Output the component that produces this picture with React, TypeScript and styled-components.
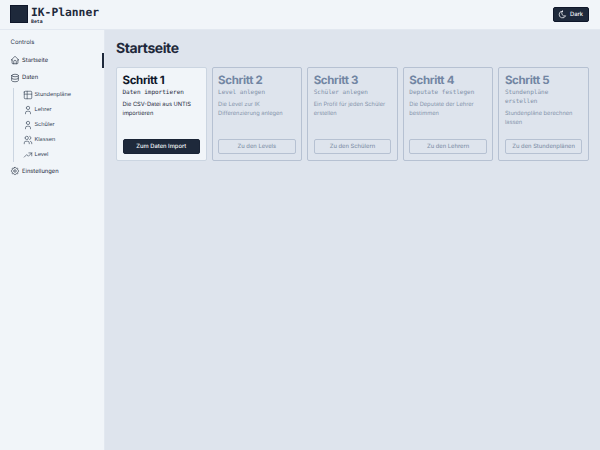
import React from "react";
import styled, { createGlobalStyle } from "styled-components";
import { TbMoon, TbHome, TbDatabase, TbTable, TbUser, TbUsers, TbTrendingUp, TbSettings } from "react-icons/tb";

const Global = createGlobalStyle`
  html, body { margin: 0; padding: 0; height: 100%; }
  #root { height: 100%; }
  body { font-family: Inter, "Liberation Sans", sans-serif; background: #dee4ed; text-rendering: geometricPrecision; }
  * { box-sizing: border-box; }
`;

const Page = styled.div`
  width: 600px;
  height: 450px;
  display: flex;
  flex-direction: column;
  overflow: hidden;
`;

const Header = styled.header`
  height: 29.5px;
  flex: none;
  display: flex;
  align-items: center;
  justify-content: space-between;
  padding: 0 11.5px 0 10px;
  background: #f1f5f9;
  border-bottom: 1px solid #e2e8f0;
`;

const Brand = styled.div`
  display: flex;
  align-items: center;
  gap: 3px;
`;

const Logo = styled.div`
  width: 18px;
  height: 18px;
  background: #1e293b;
  border: 1px solid #0f172a;
`;

const BrandText = styled.div`
  display: flex;
  flex-direction: column;
  padding-top: 2.5px;
  font-family: "DejaVu Sans Mono", "Liberation Mono", monospace;
  color: #1e293b;
`;

const BrandTitle = styled.span`
  font-size: 11.3px;
  font-weight: 700;
  line-height: 13px;
`;

const BrandSub = styled.span`
  font-size: 4.8px;
  font-weight: 700;
  line-height: 6px;
  margin-top: 1px;
`;

const ThemeButton = styled.button`
  height: 15px;
  width: 36px;
  display: flex;
  align-items: center;
  justify-content: center;
  gap: 3px;
  padding: 0;
  border: 1px solid #0f172a;
  border-radius: 2px;
  background: #1e293b;
  color: #f8fafc;
  font: 500 5.8px Inter, sans-serif;
  text-rendering: geometricPrecision;
`;

const Body = styled.div`
  flex: 1;
  display: flex;
  min-height: 0;
`;

const Sidebar = styled.aside`
  width: 104.5px;
  flex: none;
  background: #f1f5f9;
  border-right: 1px solid #e2e8f0;
  padding-top: 8px;
  display: flex;
  flex-direction: column;
`;

const SidebarLabel = styled.div`
  font-size: 6px;
  line-height: 9px;
  color: #334155;
  padding-left: 10.5px;
  margin-bottom: 5px;
`;

const NavItem = styled.div<{ $active?: boolean }>`
  position: relative;
  height: 17.5px;
  display: flex;
  align-items: center;
  gap: 2px;
  padding-left: 10px;
  font-size: 5.8px;
  color: #1e293b;
  svg { flex: none; }
  ${(p) =>
    p.$active &&
    `&::after { content: ""; position: absolute; right: 0; top: 1.5px; width: 1.5px; height: 15px; background: #1e293b; }`}
`;

const SubNav = styled.div`
  margin: 1px 0 0.5px 13px;
  padding-left: 8.5px;
  border-left: 1px solid #cbd5e1;
  display: flex;
  flex-direction: column;
`;

const SubItem = styled.div`
  height: 14.9px;
  display: flex;
  align-items: center;
  gap: 2px;
  font-size: 5.6px;
  color: #334155;
  svg { flex: none; }
`;

const Main = styled.main`
  flex: 1;
  min-width: 0;
  padding: 10px 11px 0 11.5px;
`;

const Title = styled.h1`
  margin: 0 0 9.5px;
  font-size: 14px;
  line-height: 18px;
  font-weight: 700;
  letter-spacing: -0.03em;
  color: #1e293b;
`;

const Cards = styled.div`
  display: grid;
  grid-template-columns: repeat(5, 1fr);
  gap: 5px;
`;

const Card = styled.section<{ $active?: boolean }>`
  height: 94px;
  padding: 6px 5.5px;
  display: flex;
  flex-direction: column;
  border: 1px solid ${(p) => (p.$active ? "#cbd5e1" : "#b6c1d2")};
  border-radius: 2px;
  background: ${(p) => (p.$active ? "#f1f5f9" : "transparent")};
`;

const CardTitle = styled.h2<{ $active?: boolean }>`
  margin: 0;
  font-size: 11.5px;
  line-height: 13px;
  font-weight: 700;
  letter-spacing: -0.03em;
  color: ${(p) => (p.$active ? "#0f172a" : "#7286a3")};
`;

const CardSub = styled.div<{ $active?: boolean }>`
  font-family: "DejaVu Sans Mono", "Liberation Mono", monospace;
  font-size: 6px;
  line-height: 9px;
  margin-top: 0.5px;
  color: ${(p) => (p.$active ? "#1e293b" : "#8090a8")};
`;

const CardText = styled.p<{ $active?: boolean }>`
  margin: 3px 0 0;
  font-size: 5.7px;
  line-height: 9px;
  color: ${(p) => (p.$active ? "#1e293b" : "#8594ab")};
`;

const CardButton = styled.button<{ $active?: boolean }>`
  margin-top: auto;
  height: 15.5px;
  width: 100%;
  padding: 0;
  border-radius: 2px;
  font: 500 5.8px Inter, sans-serif;
  text-rendering: geometricPrecision;
  border: 1px solid ${(p) => (p.$active ? "#1a2436" : "#b6c1d2")};
  background: ${(p) => (p.$active ? "#1e293b" : "transparent")};
  color: ${(p) => (p.$active ? "#f8fafc" : "#8594ab")};
`;

const steps = [
  { n: 1, sub: "Daten importieren", text: "Die CSV-Datei aus UNTIS importieren", btn: "Zum Daten Import", active: true },
  { n: 2, sub: "Level anlegen", text: "Die Level zur IK Differenzierung anlegen", btn: "Zu den Levels" },
  { n: 3, sub: "Schüler anlegen", text: "Ein Profil für jeden Schüler erstellen", btn: "Zu den Schülern" },
  { n: 4, sub: "Deputate festlegen", text: "Die Deputate der Lehrer bestimmen", btn: "Zu den Lehrern" },
  { n: 5, sub: "Stundenpläne erstellen", text: "Stundenpläne berechnen lassen", btn: "Zu den Stundenplänen" },
];

export default function App() {
  return (
    <Page>
      <Global />
      <Header>
        <Brand>
          <Logo />
          <BrandText>
            <BrandTitle>IK-Planner</BrandTitle>
            <BrandSub>Beta</BrandSub>
          </BrandText>
        </Brand>
        <ThemeButton>
          <TbMoon size={9} />
          Dark
        </ThemeButton>
      </Header>
      <Body>
        <Sidebar>
          <SidebarLabel>Controls</SidebarLabel>
          <NavItem $active>
            <TbHome size={10} strokeWidth={1.5} />
            Startseite
          </NavItem>
          <NavItem>
            <TbDatabase size={10} strokeWidth={1.5} />
            Daten
          </NavItem>
          <SubNav>
            <SubItem>
              <TbTable size={10} strokeWidth={1.5} />
              Stundenpläne
            </SubItem>
            <SubItem>
              <TbUser size={10} strokeWidth={1.5} />
              Lehrer
            </SubItem>
            <SubItem>
              <TbUser size={10} strokeWidth={1.5} />
              Schüler
            </SubItem>
            <SubItem>
              <TbUsers size={10} strokeWidth={1.5} />
              Klassen
            </SubItem>
            <SubItem>
              <TbTrendingUp size={10} strokeWidth={1.5} />
              Level
            </SubItem>
          </SubNav>
          <NavItem>
            <TbSettings size={10} strokeWidth={1.5} />
            Einstellungen
          </NavItem>
        </Sidebar>
        <Main>
          <Title>Startseite</Title>
          <Cards>
            {steps.map((s) => (
              <Card key={s.n} $active={s.active}>
                <CardTitle $active={s.active}>Schritt {s.n}</CardTitle>
                <CardSub $active={s.active}>{s.sub}</CardSub>
                <CardText $active={s.active}>{s.text}</CardText>
                <CardButton $active={s.active}>{s.btn}</CardButton>
              </Card>
            ))}
          </Cards>
        </Main>
      </Body>
    </Page>
  );
}
